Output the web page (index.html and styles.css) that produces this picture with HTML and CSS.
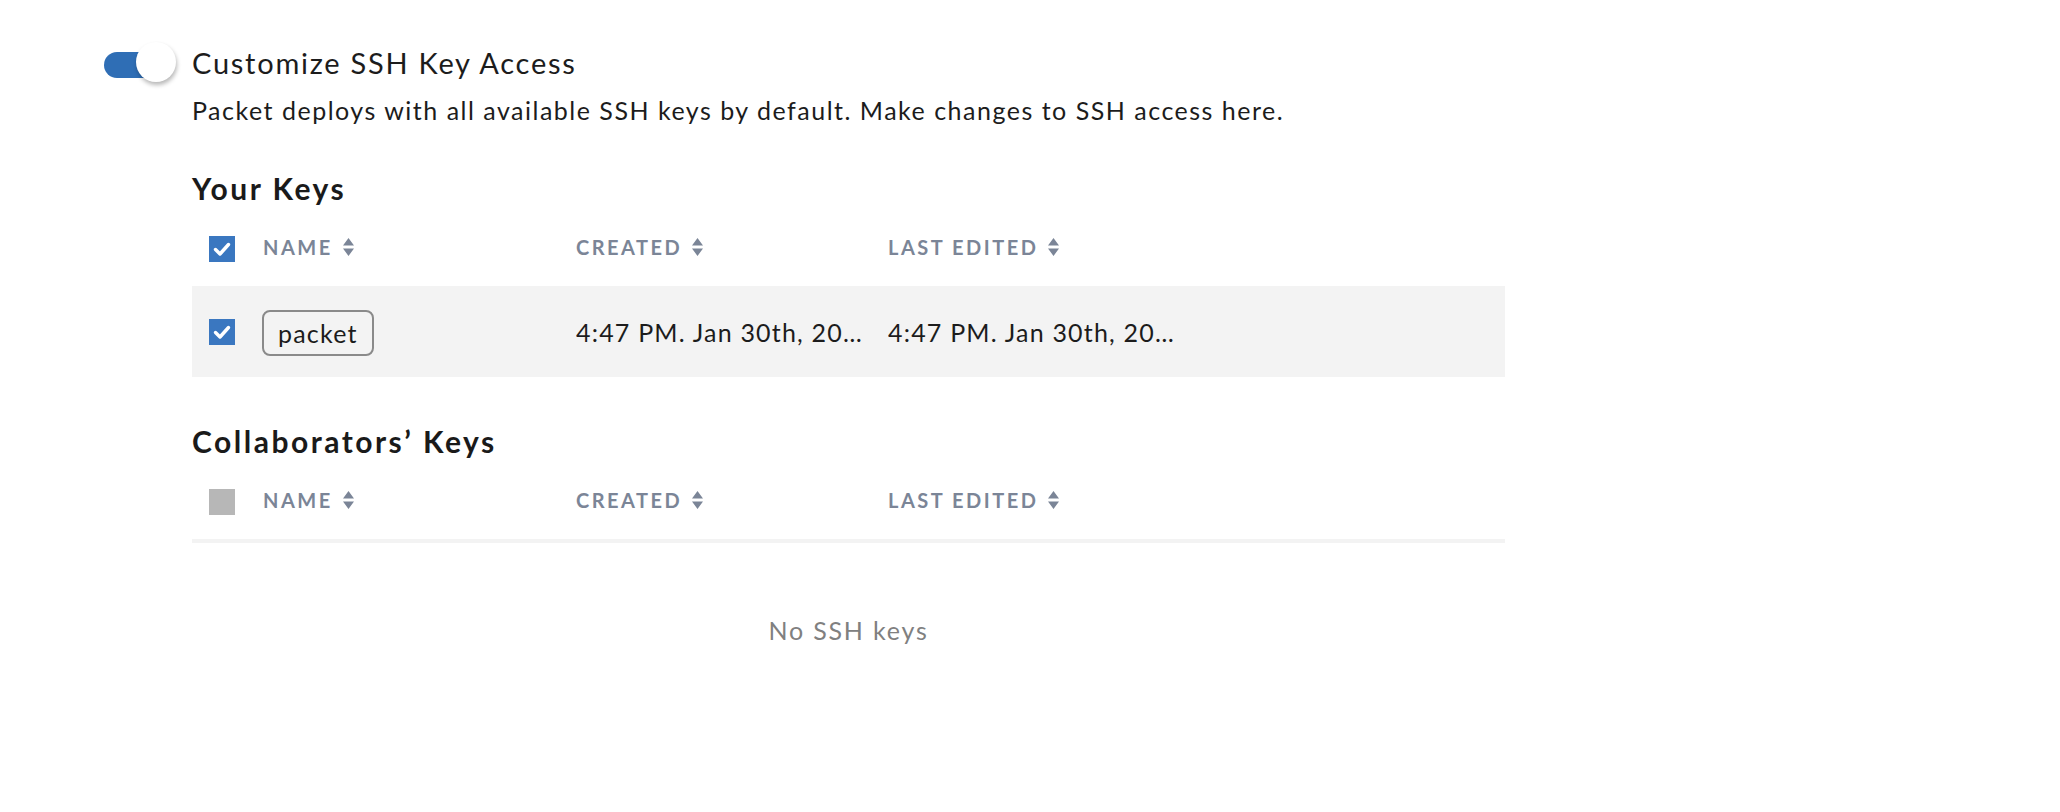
FILE: index.html
```html
<!DOCTYPE html>
<html lang="en">
<head>
<meta charset="utf-8">
<title>Customize SSH Key Access</title>
<link rel="stylesheet" href="styles.css">
</head>
<body>
<div class="page">
  <div class="toggle" role="switch" aria-checked="true">
    <span class="track"></span>
    <span class="knob"></span>
  </div>
  <div class="content">
    <div class="title">Customize SSH Key Access</div>
    <div class="desc">Packet deploys with all available SSH keys by default. Make changes to SSH access here.</div>

    <h2 class="heading">Your Keys</h2>
    <div class="table">
      <div class="row head">
        <div class="cell cb-cell"><span class="cb on"><svg viewBox="0 0 26 26" width="26" height="26"><path d="M6.5 13.5 L11 18 L19.5 8.5" fill="none" stroke="#fff" stroke-width="3.4" stroke-linecap="round" stroke-linejoin="round"/></svg></span></div>
        <div class="cell th">NAME <svg class="sort" viewBox="0 0 11 18" width="11" height="18"><path d="M5.5 0 L11 7.5 L0 7.5 Z M0 10.5 L11 10.5 L5.5 18 Z" fill="#7b8597"/></svg></div>
        <div class="cell th">CREATED <svg class="sort" viewBox="0 0 11 18" width="11" height="18"><path d="M5.5 0 L11 7.5 L0 7.5 Z M0 10.5 L11 10.5 L5.5 18 Z" fill="#7b8597"/></svg></div>
        <div class="cell th">LAST EDITED <svg class="sort" viewBox="0 0 11 18" width="11" height="18"><path d="M5.5 0 L11 7.5 L0 7.5 Z M0 10.5 L11 10.5 L5.5 18 Z" fill="#7b8597"/></svg></div>
        <div class="cell"></div>
      </div>
      <div class="row body">
        <div class="cell cb-cell"><span class="cb on"><svg viewBox="0 0 26 26" width="26" height="26"><path d="M6.5 13.5 L11 18 L19.5 8.5" fill="none" stroke="#fff" stroke-width="3.4" stroke-linecap="round" stroke-linejoin="round"/></svg></span></div>
        <div class="cell"><span class="tag">packet</span></div>
        <div class="cell td">4:47 PM. Jan 30th, 20…</div>
        <div class="cell td">4:47 PM. Jan 30th, 20…</div>
        <div class="cell"></div>
      </div>
    </div>

    <h2 class="heading collab">Collaborators’ Keys</h2>
    <div class="table">
      <div class="row head ruled">
        <div class="cell cb-cell"><span class="cb off"></span></div>
        <div class="cell th">NAME <svg class="sort" viewBox="0 0 11 18" width="11" height="18"><path d="M5.5 0 L11 7.5 L0 7.5 Z M0 10.5 L11 10.5 L5.5 18 Z" fill="#7b8597"/></svg></div>
        <div class="cell th">CREATED <svg class="sort" viewBox="0 0 11 18" width="11" height="18"><path d="M5.5 0 L11 7.5 L0 7.5 Z M0 10.5 L11 10.5 L5.5 18 Z" fill="#7b8597"/></svg></div>
        <div class="cell th">LAST EDITED <svg class="sort" viewBox="0 0 11 18" width="11" height="18"><path d="M5.5 0 L11 7.5 L0 7.5 Z M0 10.5 L11 10.5 L5.5 18 Z" fill="#7b8597"/></svg></div>
        <div class="cell"></div>
      </div>
    </div>
    <div class="empty">No SSH keys</div>
  </div>
</div>
</body>
</html>
```

FILE: styles.css
```css
html, body {
  margin: 0;
  padding: 0;
  background: #ffffff;
}
body {
  font-family: "Lato", "Liberation Sans", sans-serif;
  color: #1c1c1c;
}
.page {
  display: flex;
  align-items: flex-start;
  padding: 42px 0 0 104px;
}
.toggle {
  position: relative;
  width: 73px;
  height: 40px;
  flex: none;
}
.track {
  position: absolute;
  left: 0;
  top: 10px;
  width: 62px;
  height: 26px;
  border-radius: 13px;
  background: #2f6eb5;
}
.knob {
  position: absolute;
  left: 32px;
  top: 0;
  width: 40px;
  height: 40px;
  border-radius: 50%;
  background: #ffffff;
  box-shadow: 1px 3px 4px rgba(0, 0, 0, 0.28);
}
.content {
  margin-left: 15px;
  width: 1313px;
}
.title {
  font-size: 29px;
  line-height: 40px;
  letter-spacing: 1.75px;
  margin-top: 1px;
}
.desc {
  font-size: 25px;
  line-height: 34px;
  letter-spacing: 1.5px;
  margin-top: 10px;
}
.heading {
  margin: 41px 0 0;
  font-size: 30px;
  line-height: 40px;
  font-weight: 700;
  letter-spacing: 2.5px;
  color: #1a1a1a;
}
.heading.collab {
  margin-top: 44px;
}
.row {
  display: grid;
  grid-template-columns: 71px 313px 312px 312px 1fr;
  align-items: center;
}
.row.head {
  height: 78px;
}
.row.head.ruled {
  border-bottom: 4px solid #f3f3f3;
}
.row.body {
  height: 91px;
  background: #f3f3f3;
}
.cell {
  min-width: 0;
}
.cb-cell {
  padding-left: 17px;
  display: flex;
  align-items: center;
}
.cb {
  display: block;
  width: 26px;
  height: 26px;
}
.cb svg {
  display: block;
}
.cb.on {
  background: #3a77c0;
}
.cb.off {
  background: #b7b7b7;
  margin-top: 4px;
}
.row.head .cb.on {
  margin-top: 3px;
}
.th {
  display: flex;
  align-items: center;
  font-size: 20px;
  font-weight: 700;
  letter-spacing: 2.5px;
  color: #7b8597;
}
.sort {
  margin-left: 10px;
  flex: none;
}
.td {
  font-size: 25px;
  letter-spacing: 1.2px;
  padding-right: 12px;
  white-space: nowrap;
  overflow: hidden;
  text-overflow: ellipsis;
}
.tag {
  display: inline-block;
  font-size: 25px;
  line-height: 30px;
  letter-spacing: 1.2px;
  padding: 6px 14px 6px 14px;
  border: 2px solid #8a8a8a;
  border-radius: 8px;
  margin-top: 3px;
  margin-left: -1px;
}
.empty {
  margin-top: 70px;
  text-align: center;
  font-size: 25px;
  line-height: 34px;
  letter-spacing: 1.8px;
  color: #808080;
}
```
